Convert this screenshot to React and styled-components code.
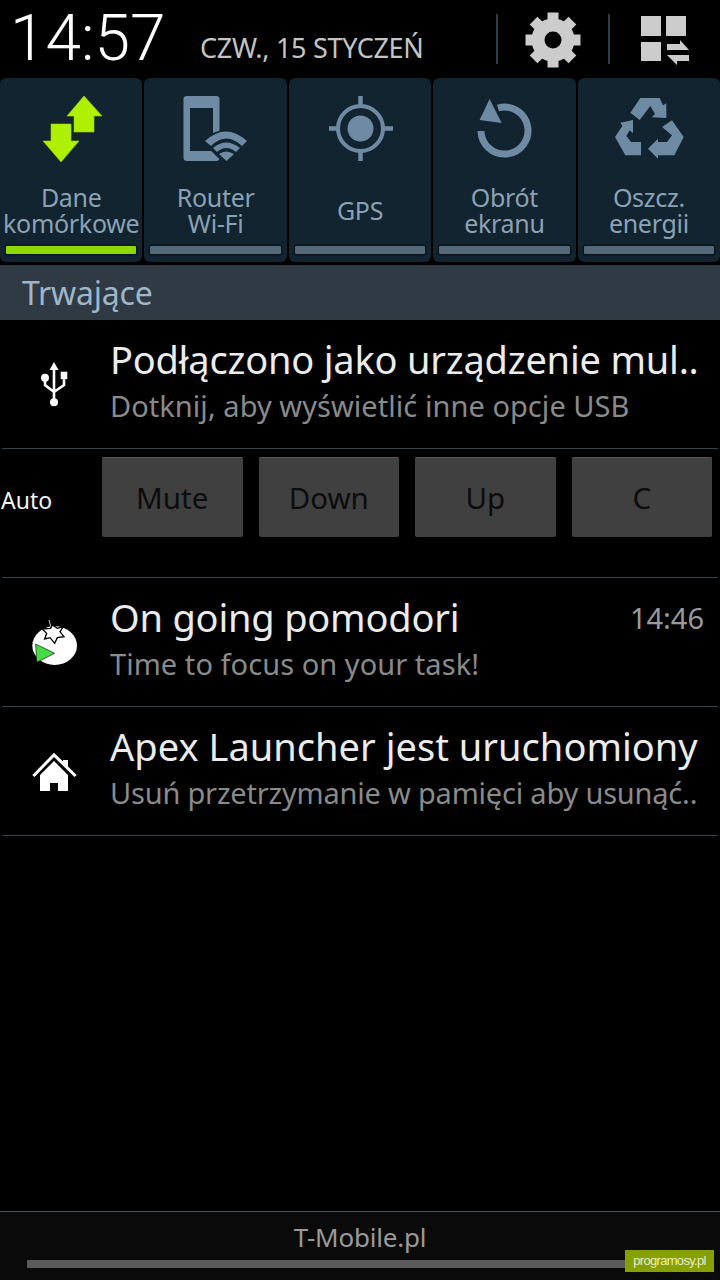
import React from "react";
import styled, { createGlobalStyle } from "styled-components";

const Global = createGlobalStyle`
  html, body { margin: 0; padding: 0; background: #000; }
  body { font-family: "Noto Sans", "Open Sans", sans-serif; }
`;

const tiles = [
  { id: "data", lines: ["Dane", "komórkowe"], on: true },
  { id: "router", lines: ["Router", "Wi-Fi"] },
  { id: "gps", lines: ["GPS"] },
  { id: "rotate", lines: ["Obrót", "ekranu"] },
  { id: "power", lines: ["Oszcz.", "energii"] },
];

const TileIcon = ({ id }) => {
  const c = "#6e8ba3";
  if (id === "data") {
    return (
      <svg width="72" height="72" viewBox="0 0 72 72">
        <path d="M49 2 L67 22 L59 22 L59 38 L39 38 L39 22 L32 22 Z" fill="#aef000" stroke="#9bd600" strokeWidth="0.600" />
        <path d="M26 68 L8 47 L16 47 L16 30 L36 30 L36 47 L44 47 Z" fill="#aef000" stroke="#9bd600" strokeWidth="0.600" />
      </svg>
    );
  }
  if (id === "router") {
    return (
      <svg width="72" height="72" viewBox="0 0 72 72">
        <path fillRule="evenodd" d="M7 2 H36 Q39.500 2 39.500 5 V64 Q39.500 67 36 67 H7 Q3.500 67 3.500 64 V5 Q3.500 2 7 2 Z M10 14 V57 H33 V14 Z" fill={c} />
        <path d="M21 47 Q46 25 71 47 L46.500 72 Z" fill="#122430" />
        <path d="M25 47 Q46 28 67 47 L62 52 Q46 37 31 52 Z" fill={c} />
        <path d="M33 54 Q46 43 60 54 L56 58 Q46 50 37 58 Z" fill={c} />
        <path d="M39 60 Q46 55 54 60 L46.500 67 Z" fill={c} />
      </svg>
    );
  }
  if (id === "gps") {
    return (
      <svg width="72" height="72" viewBox="0 0 72 72">
        <circle cx="36.500" cy="34.500" r="22.500" fill="none" stroke={c} strokeWidth="4" />
        <circle cx="36.500" cy="34.500" r="13" fill={c} />
        <path d="M36.500 2 V13 M36.500 56 V67 M5 34.500 H15 M58 34.500 H69" stroke={c} strokeWidth="4.500" fill="none" />
      </svg>
    );
  }
  if (id === "rotate") {
    return (
      <svg width="72" height="72" viewBox="0 0 72 72">
        <path d="M30 14 A23.500 23.500 0 1 1 13 37" fill="none" stroke={c} strokeWidth="7" />
        <path d="M21.600 5 L33.600 29 L11.600 26 Z" fill={c} />
      </svg>
    );
  }
  return (
    <svg width="80" height="72" viewBox="-4 6 240 216">
      <path d="M60 62 L90 18 H148 L158 40 L168 34 V78 L124 76 L134 66 L120 42 L88 84 Z" fill={c} />
      <path d="M68 84 L30 92 L36 102 L14 135 L45 190 H92 V150 H62 L48 132 L58 115 L68 124 Z" fill={c} />
      <path d="M185 85 L220 135 L192 190 H143 V200 L113 170 L143 140 V150 H170 L185 130 L155 105 Z" fill={c} />
    </svg>
  );
};

const GearIcon = () => (
  <svg width="56" height="56" viewBox="-28 -28 56 56">
    <circle r="15" fill="none" stroke="#cccccc" strokeWidth="13" />
    {[0, 45, 90, 135, 180, 225, 270, 315].map((a) => (
      <rect key={a} x="-5.500" y="-27.500" width="11" height="10" fill="#cccccc" transform={`rotate(${a})`} />
    ))}
  </svg>
);

const GridIcon = () => (
  <svg width="48" height="50" viewBox="0 0 48 50">
    <path d="M0 0 H20 V20 H0 Z M25 0 H45 V20 H25 Z M0 26 H20 V45 H0 Z" fill="#cccccc" />
    <path d="M26 28 H39 V24 L48 34 H26 Z M26 39 H48 V45 H36 V49 Z" fill="#cccccc" />
  </svg>
);

const UsbIcon = () => (
  <svg width="30" height="46" viewBox="0 0 30 46">
    <path d="M15 1 L19.500 9 H10.500 Z" fill="#fff" />
    <path d="M15 8 V41 M6 17 V24 L15 31 L25 24 V17" stroke="#fff" strokeWidth="2.600" fill="none" />
    <circle cx="6" cy="16.700" r="4" fill="#fff" />
    <circle cx="15" cy="41.300" r="4" fill="#fff" />
    <rect x="21.700" y="10.700" width="6.600" height="7.400" fill="#fff" />
  </svg>
);

const TomatoIcon = () => (
  <svg width="60" height="55" viewBox="0 0 180 165">
    <ellipse cx="92" cy="92" rx="67" ry="58" fill="#fff" />
    <path d="M75 15 L80 34" stroke="#ccc" strokeWidth="3" />
    <path d="M55 42 L80 40 L85 30 L100 40 L118 35 L108 50 L120 65 L100 68 L92 85 L78 68 L62 72 L68 55 Z" fill="#fff" stroke="#000" strokeWidth="4" />
    <path d="M35 87 L92 115 L38 142 Z" fill="#44dd44" stroke="#111" strokeWidth="2" />
  </svg>
);

const HomeIcon = () => (
  <svg width="46" height="40" viewBox="0 0 46 40">
    <path d="M1.300 24 L23 1.700 L32 10.500 V9 H37 V15.500 L45.700 24 L43.500 26 L23 6 L3.500 26 Z" fill="#fff" />
    <path fillRule="evenodd" d="M9 24 L23 10 L37 24 V40 H27 V32 H19 V40 H9 Z" fill="#fff" />
  </svg>
);

const notifications = {
  usb: {
    icon: <UsbIcon />,
    title: "Podłączono jako urządzenie mul..",
    text: "Dotknij, aby wyświetlić inne opcje USB",
  },
  pomodoro: {
    icon: <TomatoIcon />,
    title: "On going pomodori",
    text: "Time to focus on your task!",
    time: "14:46",
  },
  apex: {
    icon: <HomeIcon />,
    title: "Apex Launcher jest uruchomiony",
    text: "Usuń przetrzymanie w pamięci aby usunąć..",
    titleSpacing: 0.03,
    textSpacing: -0.2,
  },
};

const Notification = ({ data }) => (
  <Row>
    <RowIcon>{data.icon}</RowIcon>
    <RowBody>
      <RowTitle $spacing={data.titleSpacing ?? -0.2}>{data.title}</RowTitle>
      <RowText $spacing={data.textSpacing ?? 0.05}>{data.text}</RowText>
    </RowBody>
    {data.time && <RowTime>{data.time}</RowTime>}
  </Row>
);

export default function App() {
  return (
    <Screen>
      <Global />
      <Header>
        <Clock>14:57</Clock>
        <DateText>CZW., 15 STYCZEŃ</DateText>
        <HeaderDivider />
        <GearButton><GearIcon /></GearButton>
        <HeaderDivider />
        <GridButton><GridIcon /></GridButton>
      </Header>
      <TileRow>
        {tiles.map((t) => (
          <Tile key={t.id}>
            <TileIconBox><TileIcon id={t.id} /></TileIconBox>
            <TileLabel>
              {t.lines.map((l) => <div key={l}>{l}</div>)}
            </TileLabel>
            <TileBar $on={t.on} />
          </Tile>
        ))}
      </TileRow>
      <SectionHead>Trwające</SectionHead>
      <Notification data={notifications.usb} />
      <ButtonRow>
        <AutoLabel>Auto</AutoLabel>
        <Buttons>
          <KeyButton>Mute</KeyButton>
          <KeyButton>Down</KeyButton>
          <KeyButton>Up</KeyButton>
          <KeyButton>C</KeyButton>
        </Buttons>
      </ButtonRow>
      <Notification data={notifications.pomodoro} />
      <Notification data={notifications.apex} />
      <Spacer />
      <Footer>
        <Carrier>T-Mobile.pl</Carrier>
        <Scroll />
        <Badge>programosy.pl</Badge>
      </Footer>
    </Screen>
  );
}

const Screen = styled.div`
  width: 720px;
  height: 1280px;
  background: #000;
  display: flex;
  flex-direction: column;
  overflow: hidden;
  position: relative;
`;

const Header = styled.div`
  height: 78px;
  display: flex;
  align-items: center;
  padding-left: 10px;
  box-sizing: border-box;
  flex-shrink: 0;
`;

const Clock = styled.div`
  font-size: 64px;
  font-weight: 300;
  font-family: Roboto, sans-serif;
  color: #fff;
  width: 190px;
  line-height: 76px;
  padding-left: 0;
`;

const DateText = styled.div`
  font-size: 27px;
  line-height: 36px;
  color: #c4c4c4;
  width: 296px;
  padding-top: 18px;
  white-space: nowrap;
  letter-spacing: -0.3px;
`;

const HeaderDivider = styled.div`
  width: 2px;
  height: 50px;
  background: #2b3b48;
`;

const GearButton = styled.div`
  width: 110px;
  display: flex;
  justify-content: center;
  margin-top: 2px;
`;

const GridButton = styled.div`
  flex: 1;
  display: flex;
  padding-left: 31px;
  margin-top: 4px;
`;

const TileRow = styled.div`
  display: flex;
  gap: 2px;
  height: 184px;
  flex-shrink: 0;
`;

const Tile = styled.div`
  flex: 1 1 0;
  min-width: 0;
  background: #122430;
  border-radius: 6px;
  display: flex;
  flex-direction: column;
  align-items: center;
  position: relative;
  box-sizing: border-box;
  padding: 16px 6px 8px;
`;

const TileIconBox = styled.div`
  height: 72px;
  display: flex;
  align-items: center;
`;

const TileLabel = styled.div`
  height: 64px;
  margin-top: 12px;
  display: flex;
  flex-direction: column;
  justify-content: center;
  align-items: center;
  font-size: 25px;
  line-height: 26px;
  color: #8ba2b5;
  white-space: nowrap;
  letter-spacing: -0.3px;
`;

const TileBar = styled.div`
  margin-top: auto;
  width: 100%;
  height: 8px;
  border-radius: 1px;
  background: ${(p) => (p.$on ? "#8cd800" : "#536878")};
  box-shadow: 0 0 0 1.500px #0a151d;
`;

const SectionHead = styled.div`
  margin-top: 3px;
  height: 55px;
  background: #2f3a44;
  color: #9fb6c9;
  font-size: 32px;
  line-height: 55px;
  padding-left: 22px;
  flex-shrink: 0;
  letter-spacing: -0.2px;
`;

const Row = styled.div`
  height: 128px;
  margin: 0 2px;
  box-sizing: content-box;
  border-bottom: 1px solid #36414d;
  display: flex;
  position: relative;
  flex-shrink: 0;
`;

const RowIcon = styled.div`
  width: 104px;
  display: flex;
  justify-content: center;
  align-items: center;
  height: 128px;
`;

const RowBody = styled.div`
  padding-left: 4px;
  padding-top: 13px;
`;

const RowTitle = styled.div`
  font-size: 38px;
  line-height: 52px;
  color: #ececec;
  white-space: nowrap;
  letter-spacing: ${(p) => p.$spacing}px;
`;

const RowText = styled.div`
  font-size: 29px;
  line-height: 42px;
  color: #8a8a8a;
  white-space: nowrap;
  letter-spacing: ${(p) => p.$spacing}px;
`;

const RowTime = styled.div`
  position: absolute;
  right: 14px;
  top: 20px;
  font-size: 29px;
  line-height: 40px;
  color: #9a9a9a;
`;

const ButtonRow = styled.div`
  height: 128px;
  margin: 0 2px;
  border-bottom: 1px solid #36414d;
  display: flex;
  flex-shrink: 0;
`;

const AutoLabel = styled.div`
  width: 100px;
  margin-left: -1px;
  font-size: 23px;
  line-height: 102px;
  color: #f4f4f4;
`;

const Buttons = styled.div`
  display: flex;
  gap: 16px;
  padding-top: 8px;
  padding-left: 1px;
`;

const KeyButton = styled.div`
  width: 140.500px;
  height: 80px;
  background: #404040;
  border-radius: 2px;
  color: #0d0d0d;
  font-size: 29.500px;
  display: flex;
  align-items: center;
  justify-content: center;
  box-shadow: inset 0 1px 0 #555;
`;

const Spacer = styled.div`
  flex: 1;
`;

const Footer = styled.div`
  height: 68px;
  border-top: 1px solid #3c5060;
  background: #0a0a0a;
  position: relative;
  flex-shrink: 0;
  display: flex;
  flex-direction: column;
  align-items: center;
`;

const Carrier = styled.div`
  font-size: 26px;
  line-height: 50px;
  color: #9a9a9a;
  letter-spacing: -0.2px;
`;

const Scroll = styled.div`
  position: absolute;
  left: 27px;
  right: 10px;
  top: 48px;
  height: 8px;
  background: #5c5c5c;
`;

const Badge = styled.div`
  position: absolute;
  left: 625px;
  top: 38px;
  width: 89px;
  height: 22px;
  background: #86a000;
  color: #e8eccf;
  font-size: 13px;
  line-height: 22px;
  text-align: center;
  letter-spacing: -0.7px;
  font-family: "Liberation Sans", sans-serif;
`;
